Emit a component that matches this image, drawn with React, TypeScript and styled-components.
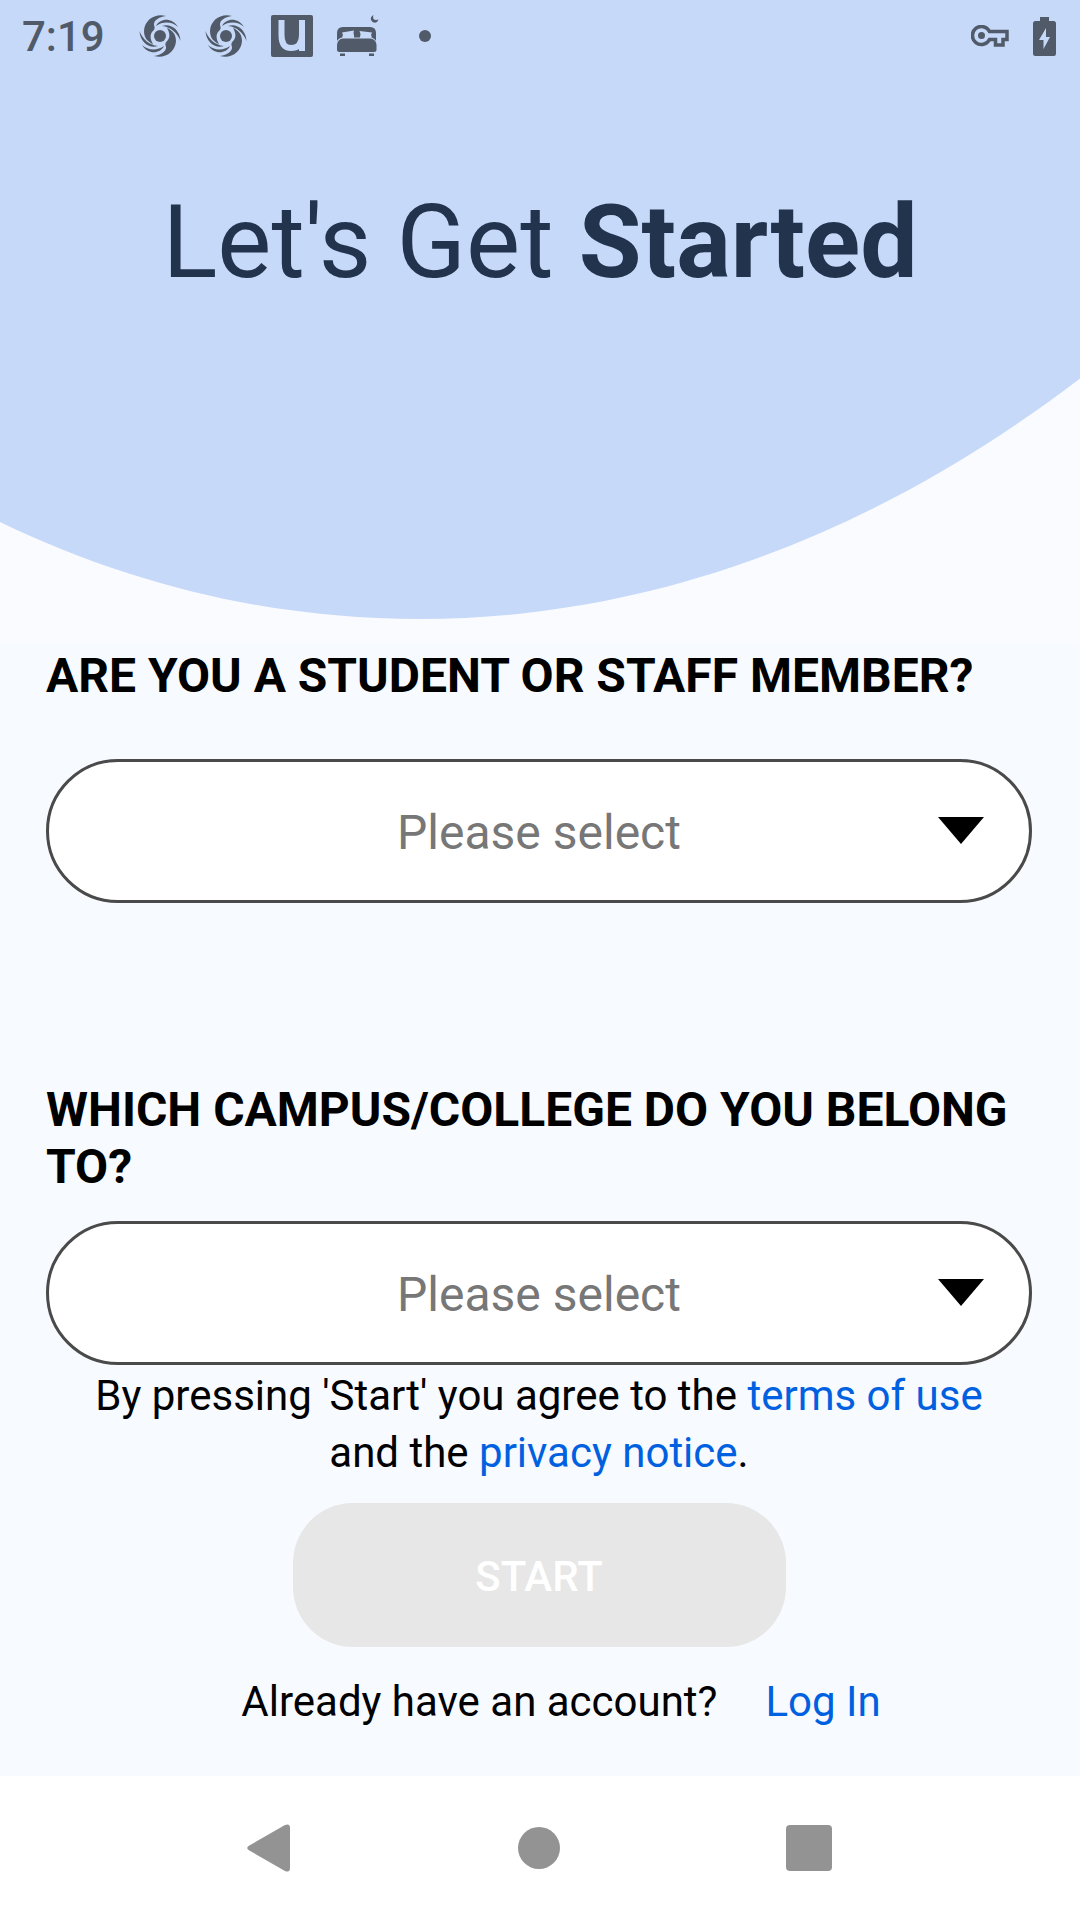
import React from "react";
import styled, { createGlobalStyle } from "styled-components";

const GlobalStyle = createGlobalStyle`
  * { box-sizing: border-box; }
  body {
    margin: 0;
    background: #f7faff;
    font-family: Roboto, "Liberation Sans", sans-serif;
    color: #000;
  }
`;

const Screen = styled.div`
  min-height: 100vh;
  display: flex;
  flex-direction: column;
`;

const Hero = styled.header`
  position: relative;
  overflow: hidden;
  background: #fafbff;
  padding-bottom: 340px;
`;

const HeroShape = styled.svg`
  position: absolute;
  inset: 0;
  width: 100%;
  height: 100%;
`;

const StatusBar = styled.div`
  position: relative;
  display: flex;
  align-items: center;
  justify-content: space-between;
  height: 72px;
  padding: 0 24px 0 22px;
  color: #515a68;
`;

const StatusGroup = styled.div`
  display: flex;
  align-items: center;
  gap: 24px;
`;

const Clock = styled.time`
  padding-top: 2px;
  margin-right: 10px;
  font-size: 42px;
  line-height: 48px;
  font-weight: 500;
`;

const Title = styled.h1`
  position: relative;
  margin: 110px 0 0;
  font-size: 102px;
  line-height: 120px;
  font-weight: 400;
  text-align: center;
  color: #22334d;
`;

const Form = styled.form`
  flex: 1;
  display: flex;
  flex-direction: column;
  padding: 5px 48px 45px 46px;
`;

const Field = styled.div<{ $gap: number }>`
  display: flex;
  flex-direction: column;
  gap: ${(p) => p.$gap}px;
`;

const Label = styled.label`
  font-size: 48px;
  line-height: 57px;
  font-weight: 700;
`;

const SelectBox = styled.div`
  position: relative;
  display: flex;
`;

const Select = styled.select`
  appearance: none;
  width: 100%;
  height: 144px;
  padding: 3px 100px 0;
  border: 3px solid #4a4a4a;
  border-radius: 72px;
  background: #fff;
  color: #777;
  font: 400 48px Roboto, "Liberation Sans", sans-serif;
  text-align: center;
  text-align-last: center;
`;

const Arrow = styled.svg`
  position: absolute;
  right: 48px;
  top: 58px;
  width: 46px;
  height: 27px;
  pointer-events: none;
`;

const Spacer = styled.div`
  height: 178px;
`;

const Terms = styled.p`
  margin: 2px 0 22px;
  padding: 0 40px;
  font-size: 42px;
  line-height: 57px;
  text-align: center;
`;

const Link = styled.a`
  color: #0061e0;
  text-decoration: none;
`;

const StartButton = styled.button`
  align-self: center;
  width: 50%;
  height: 144px;
  padding: 3px 0 0;
  border: 0;
  border-radius: 60px;
  background: #e7e7e7;
  color: #fff;
  font: 500 42px Roboto, "Liberation Sans", sans-serif;
`;

const Account = styled.p`
  display: flex;
  justify-content: center;
  gap: 48px;
  margin: 26px 0 0;
  padding-left: 44px;
  font-size: 42px;
  line-height: 57px;
`;

const NavBar = styled.nav`
  display: flex;
  justify-content: center;
  gap: 126px;
  height: 144px;
  padding-right: 2px;
  background: #fff;
`;

const NavButton = styled.button`
  display: flex;
  align-items: center;
  justify-content: center;
  width: 144px;
  padding: 0;
  border: 0;
  background: none;
  color: #939393;
`;

const Swirl = () => (
  <svg width="42" height="42" viewBox="-21 -21 42 42" fill="currentColor" aria-hidden="true">
    <circle r="6" />
    {[0, 180].map((a) => (
      <g key={a} transform={`rotate(${a})`}>
        <path d="M6-20C-5-23-15.500-16-16-5C-16 2-12 6-7 8C-10 3-10-1-8-4C-5-7-5-8-6-11C-6.500-15-2-19 6-20Z" />
        <path d="M-4-10C0-18 12-19 18-9C12-14.500 3-15-4-10Z" />
        <path d="M2-10C11-13 20-6 20.500 5C17.500-3 11-9 2-10Z" />
      </g>
    ))}
  </svg>
);

const UIcon = () => (
  <svg width="42" height="42" viewBox="0 0 42 42" aria-hidden="true">
    <rect width="42" height="42" rx="2" fill="currentColor" />
    <path
      d="M10.500 5V20Q10.500 33 20 33Q31 33 31 20V5M31 20V36"
      fill="none"
      stroke="#c6d9f9"
      strokeWidth="6"
    />
  </svg>
);

const Bed = () => (
  <svg width="42" height="42" viewBox="0 0 42 42" fill="currentColor" aria-hidden="true">
    <path
      fillRule="evenodd"
      d="M0 26V18Q0 12 6 12H33Q39 12 39 18V26Q37 22.500 33 22.500H6Q2 22.500 0 26ZM5 22.500H17V20Q16 18 17 15.500L5 17.500L6 20ZM23 22.500H35L34 20L35 17.500L22.500 16L23.500 19Z"
    />
    <path d="M6 23.500H33Q39 24 39.500 30V34.500Q39.500 37 37 37H2.500Q0 37 0 34.500V30Q0.500 24 6 23.500Z" />
    <path d="M3 38.500H8V41H3ZM32 38.500H37V41H32Z" />
    <path d="M36.500 0Q33 2 34 5Q36 9 40 7L41.500 4.500Q38 5.500 36.500 4Q35.500 2 36.500 0Z" />
  </svg>
);

const DotIcon = styled.svg`
  margin-left: 16px;
`;

const Dot = () => (
  <DotIcon width="12" height="12" viewBox="0 0 12 12" fill="currentColor" aria-hidden="true">
    <circle cx="6" cy="6" r="6" />
  </DotIcon>
);

const Key = () => (
  <svg width="38" height="22" viewBox="0 0 38 22" aria-hidden="true">
    <path
      d="M18.500 6.500H36V14.500H32V20H24.500V14.500H18.500A9 9 0 1 1 18.500 6.500Z"
      fill="none"
      stroke="currentColor"
      strokeWidth="3.500"
    />
    <circle cx="10.500" cy="10.500" r="3.500" fill="currentColor" />
  </svg>
);

const Battery = () => (
  <svg width="23" height="39" viewBox="0 0 23 39" fill="currentColor" aria-hidden="true">
    <path
      fillRule="evenodd"
      d="M7 0H16V4H20.500Q23 4 23 6.500V36.500Q23 39 20.500 39H2.500Q0 39 0 36.500V6.500Q0 4 2.500 4H7ZM13 11L6 23H10.500V32L17 20H13Z"
    />
  </svg>
);

const SelectArrow = () => (
  <Arrow viewBox="0 0 46 27" aria-hidden="true">
    <path d="M0 0H46L23 27Z" />
  </Arrow>
);

type QuestionProps = { id: string; gap: number; text: string };

const Question = ({ id, gap, text }: QuestionProps) => (
  <Field $gap={gap}>
    <Label htmlFor={id}>{text}</Label>
    <SelectBox>
      <Select id={id} defaultValue="">
        <option value="">Please select</option>
      </Select>
      <SelectArrow />
    </SelectBox>
  </Field>
);

export default function App() {
  return (
    <>
      <GlobalStyle />
      <Screen>
        <Hero>
          <HeroShape viewBox="0 0 1080 642" preserveAspectRatio="none" aria-hidden="true">
            <path
              d="M0 0H1080V378.500C870 539 645 619 420 619C275 619 135 587 0 522Z"
              fill="#c6d9f9"
            />
          </HeroShape>
          <StatusBar>
            <StatusGroup>
              <Clock>7:19</Clock>
              <Swirl />
              <Swirl />
              <UIcon />
              <Bed />
              <Dot />
            </StatusGroup>
            <StatusGroup>
              <Key />
              <Battery />
            </StatusGroup>
          </StatusBar>
          <Title>
            Let's Get <b>Started</b>
          </Title>
        </Hero>
        <Form onSubmit={(e) => e.preventDefault()}>
          <Question id="role" gap={55} text="ARE YOU A STUDENT OR STAFF MEMBER?" />
          <Spacer />
          <Question id="campus" gap={26} text="WHICH CAMPUS/COLLEGE DO YOU BELONG TO?" />
          <Terms>
            By pressing 'Start' you agree to the <Link href="#terms">terms of use</Link> and the{" "}
            <Link href="#privacy">privacy notice</Link>.
          </Terms>
          <StartButton type="submit" disabled>
            START
          </StartButton>
          <Account>
            <span>Already have an account?</span>
            <Link href="#login">Log In</Link>
          </Account>
        </Form>
        <NavBar>
          <NavButton type="button" aria-label="Back">
            <svg width="44" height="48" viewBox="0 0 44 48" fill="currentColor">
              <path d="M1.500 22L38 1Q43-1 43 4V44Q43 49 38 47L1.500 26Q-1 24 1.500 22Z" />
            </svg>
          </NavButton>
          <NavButton type="button" aria-label="Home">
            <svg width="42" height="42" viewBox="0 0 42 42" fill="currentColor">
              <circle cx="21" cy="21" r="21" />
            </svg>
          </NavButton>
          <NavButton type="button" aria-label="Recent apps">
            <svg width="46" height="46" viewBox="0 0 46 46" fill="currentColor">
              <rect width="46" height="46" rx="4" />
            </svg>
          </NavButton>
        </NavBar>
      </Screen>
    </>
  );
}
